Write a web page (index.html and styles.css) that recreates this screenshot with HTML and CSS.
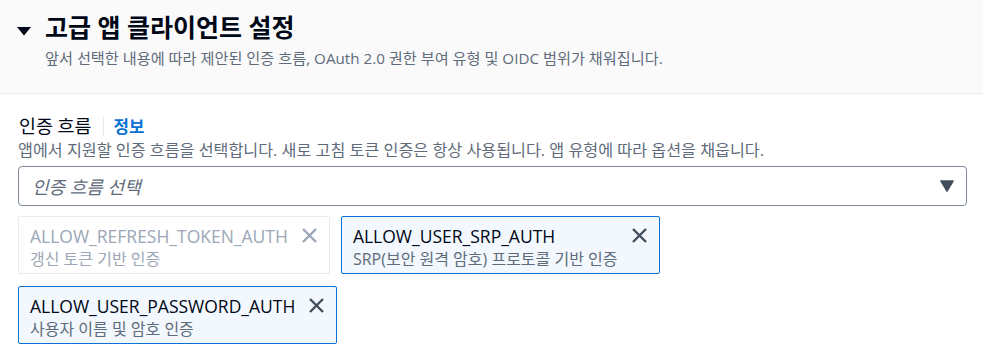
FILE: index.html
```html
<!DOCTYPE html>
<html lang="ko">
<head>
<meta charset="utf-8">
<link rel="stylesheet" href="styles.css">
</head>
<body>
<div class="header">
  <div class="title-row">
    <svg class="expand" width="14" height="9" viewBox="0 0 14 9"><polygon points="0,0 14,0 7,8.5" fill="#000716"/></svg>
    <h2 class="title">고급 앱 클라이언트 설정</h2>
  </div>
  <p class="subtitle">앞서 선택한 내용에 따라 제안된 인증 흐름, OAuth 2.0 권한 부여 유형 및 OIDC 범위가 채워집니다.</p>
</div>
<div class="content">
  <div class="label-row">
    <span class="label">인증 흐름</span>
    <span class="sep"></span>
    <a class="info">정보</a>
  </div>
  <p class="desc">앱에서 지원할 인증 흐름을 선택합니다. 새로 고침 토큰 인증은 항상 사용됩니다. 앱 유형에 따라 옵션을 채웁니다.</p>
  <div class="select">
    <span class="placeholder">인증 흐름 선택</span>
    <svg class="caret" width="14" height="12" viewBox="0 0 14 12"><polygon points="1,1 13,1 7,11" fill="#414d5c" stroke="#414d5c" stroke-width="1.5" stroke-linejoin="round"/></svg>
  </div>
  <div class="tokens">
    <div class="token disabled">
      <div class="token-text">
        <div class="token-label">ALLOW_REFRESH_TOKEN_AUTH</div>
        <div class="token-desc">갱신 토큰 기반 인증</div>
      </div>
      <svg class="x" width="17" height="17" viewBox="0 0 17 17"><path d="M2 2 L15 15 M15 2 L2 15" stroke="currentColor" stroke-width="2.4" fill="none"/></svg>
    </div>
    <div class="token">
      <div class="token-text">
        <div class="token-label">ALLOW_USER_SRP_AUTH</div>
        <div class="token-desc">SRP(보안 원격 암호) 프로토콜 기반 인증</div>
      </div>
      <svg class="x" width="17" height="17" viewBox="0 0 17 17"><path d="M2 2 L15 15 M15 2 L2 15" stroke="currentColor" stroke-width="2.4" fill="none"/></svg>
    </div>
    <div class="token">
      <div class="token-text">
        <div class="token-label">ALLOW_USER_PASSWORD_AUTH</div>
        <div class="token-desc">사용자 이름 및 암호 인증</div>
      </div>
      <svg class="x" width="17" height="17" viewBox="0 0 17 17"><path d="M2 2 L15 15 M15 2 L2 15" stroke="currentColor" stroke-width="2.4" fill="none"/></svg>
    </div>
  </div>
</div>
</body>
</html>
```
FILE: styles.css
```css
* { box-sizing: border-box; }
body {
  margin: 0;
  font-family: "Open Sans", "Noto Sans CJK KR", sans-serif;
  color: #000716;
  background: #ffffff;
}
.header {
  background: #fafafa;
  border-bottom: 1px solid #e9ebed;
  padding: 11px 16px 24px 17px;
  height: 94px;
}
.title-row {
  display: flex;
  align-items: center;
  gap: 14px;
  height: 32px;
}
.expand { margin-top: 8px; flex: none; }
.title {
  margin: 0;
  font-size: 25px;
  font-weight: 700;
  line-height: 32px;
}
.subtitle {
  margin: 4px 0 0 28px;
  font-size: 15.2px;
  line-height: 22px;
  color: #5f6b7a;
}
.content {
  padding: 20px 16px 0 18px;
}
.label-row {
  display: flex;
  align-items: center;
  height: 24px;
}
.label {
  font-size: 18.4px;
  line-height: 24px;
  padding-left: 1px;
}
.sep {
  width: 1px;
  height: 20px;
  background: #e9ebed;
  margin: 0 9px 0 12px;
}
.info {
  font-size: 16.8px;
  font-weight: 700;
  color: #0972d3;
}
.desc {
  margin: 1px 0 0 0;
  font-size: 16.2px;
  line-height: 22px;
  color: #5f6b7a;
}
.select {
  margin-top: 5px;
  height: 40px;
  border: 1px solid #7d8998;
  border-radius: 4px;
  display: flex;
  align-items: center;
  justify-content: space-between;
  padding: 0 12px 0 13px;
}
.placeholder {
  font-size: 18px;
  font-style: italic;
  color: #5f6b7a;
}
.tokens {
  margin-top: 10px;
  display: flex;
  flex-wrap: wrap;
  column-gap: 11px;
  row-gap: 12px;
}
.token {
  display: flex;
  align-items: flex-start;
  gap: 13px;
  height: 58px;
  padding: 7px 11px 3px 11px;
  border: 1px solid #0972d3;
  border-radius: 2px;
  background: #f2f8fd;
  color: #414d5c;
}
.token-label {
  font-size: 17.5px;
  line-height: 24px;
  color: #000716;
}
.token-desc {
  font-size: 16px;
  line-height: 22px;
  color: #5f6b7a;
}
.x { margin-top: 3px; flex: none; }
.token.disabled {
  background: #ffffff;
  border-color: #e9ebed;
  color: #9ba7b6;
}
.token.disabled .token-label,
.token.disabled .token-desc { color: #9ba7b6; }
```
